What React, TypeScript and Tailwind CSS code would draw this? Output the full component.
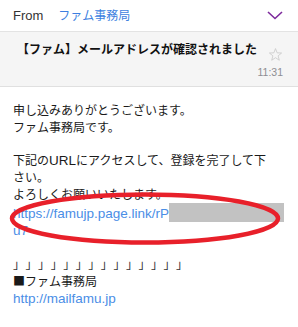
import React from "react";

const cjk = "font-['Noto_Sans_CJK_JP',sans-serif]";
const hooks = Array.from({ length: 14 });

export default function App() {
  return (
    <div className="relative w-[298px] h-[327px] overflow-hidden bg-white font-['Liberation_Sans','Noto_Sans_CJK_JP',sans-serif] text-[#111]">
      {/* From row */}
      <div className="flex h-[32px] items-center border-b border-[#e3e3e3] pl-[13px] pr-[15px]">
        <span className="text-[13px] leading-[16px] text-[#333]">From</span>
        <span className="ml-[15px] text-[12px] leading-[16px] text-[#3d7fe0]">ファム事務局</span>
        <svg className="ml-auto" width="16" height="9" viewBox="0 0 16 9">
          <path d="M1 1 L8 7.5 L15 1" fill="none" stroke="#7d2a9c" strokeWidth="1.6" />
        </svg>
      </div>

      {/* Subject */}
      <div className="flex h-[55px] border-b border-[#e0e0e0] bg-[#f5f5f5]">
        <div className="flex-1 pl-[17px] pt-[10px] text-[12px] font-bold leading-[16px] text-[#111]">
          【ファム】メールアドレスが確認されました
        </div>
        <div className="flex flex-col items-end pr-[15px] pt-[15px]">
          <svg width="15" height="15" viewBox="0 0 24 24">
            <path
              d="M12 2.5 L14.6 9.3 L21.8 9.6 L16.2 14.1 L18.1 21.2 L12 17.1 L5.9 21.2 L7.8 14.1 L2.2 9.6 L9.4 9.3 Z"
              fill="none"
              stroke="#c9c9c9"
              strokeWidth="1.3"
              strokeLinejoin="round"
            />
          </svg>
          <span className="mt-[4px] text-[10.5px] leading-[12px] text-[#8e8e93]">11:31</span>
        </div>
      </div>

      {/* Body */}
      <div className="px-[13px] pt-[16px] text-[12px] leading-[16.7px] text-[#1a1a1a]">
        <div>申し込みありがとうございます。</div>
        <div>ファム事務局です。</div>
        <div className="h-[16.7px]" />
        <div className="whitespace-nowrap">
          下記の<span className="text-[13.5px]">URL</span>にアクセスして、登録を完了して下
        </div>
        <div>さい。</div>
        <div>よろしくお願いいたします。</div>
        <div className="whitespace-nowrap text-[13.5px] text-[#4a8ee6]">
          https://famujp.page.link/rP
          <span className="inline-block h-[19px] w-[115px] bg-[#c2c2c2] align-[-4px]" />
        </div>
        <div className="text-[13.5px] text-[#4a8ee6]">u7</div>
        <div className="h-[16.7px]" />
        <div className={`${cjk} flex text-[#333]`}>
          {hooks.map((_, i) => (
            <span key={i} className="inline-block w-[12.55px]">」</span>
          ))}
        </div>
        <div>
          <span className={cjk}>■</span>ファム事務局
        </div>
        <div className="text-[13.5px] text-[#4a8ee6]">http://mailfamu.jp</div>
      </div>

      {/* Red hand-drawn ellipse overlay */}
      <svg
        className="pointer-events-none absolute left-0 top-0"
        width="298"
        height="327"
        viewBox="0 0 298 327"
      >
        <ellipse cx="145" cy="218.5" rx="133" ry="24" fill="none" stroke="#e8202a" strokeWidth="4.5" />
      </svg>
    </div>
  );
}
